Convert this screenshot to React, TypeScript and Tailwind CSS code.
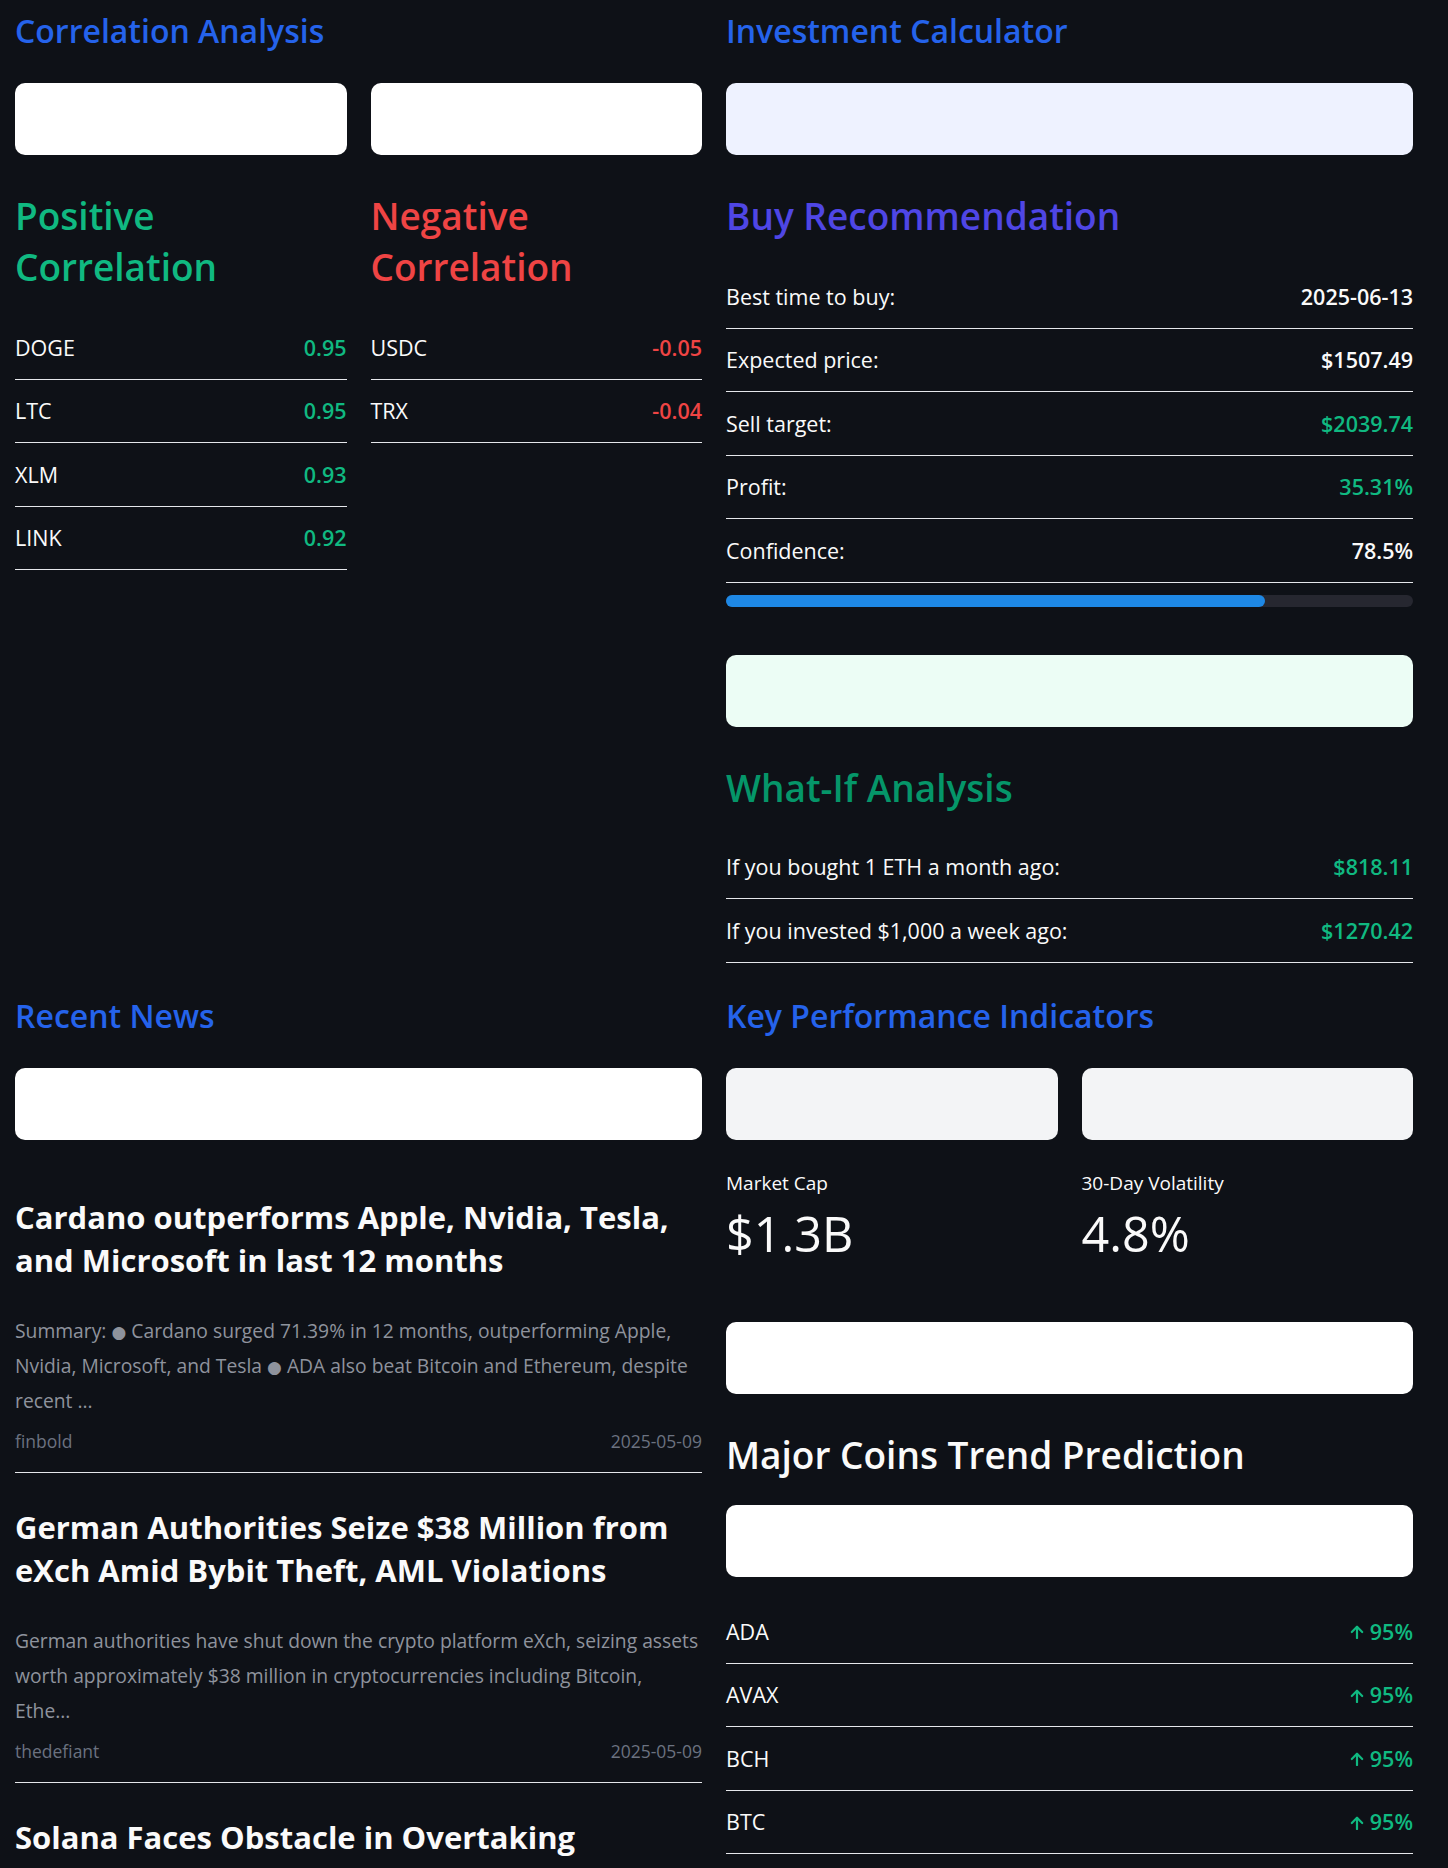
import React from "react";

interface IRowProps {
  label: string;
  value: React.ReactNode;
  valueClass: string;
}

const Row = (props: IRowProps) => (
  <div className="flex items-center justify-between border-b border-[#e5e7eb] py-[13.5px] text-[21.5px] leading-[35.5px]">
    <span>{props.label}</span>
    <span className={props.valueClass}>{props.value}</span>
  </div>
);

const ArrowUp = () => (
  <svg width="14" height="14" viewBox="0 0 14 14" fill="none" stroke="currentColor" strokeWidth="2.2" strokeLinecap="round" strokeLinejoin="round">
    <path d="M7 13V1.8" />
    <path d="M1.8 7 7 1.8 12.2 7" />
  </svg>
);

const Trend = ({ value }: { value: string }) => (
  <span className="flex items-center gap-[6px]">
    <span className="translate-y-[1px]">
      <ArrowUp />
    </span>
    {value}
  </span>
);

const Dot = () => <span className="font-['DejaVu_Sans'] text-[17px] leading-[1]">●</span>;

const positive = [
  { coin: "DOGE", value: "0.95" },
  { coin: "LTC", value: "0.95" },
  { coin: "XLM", value: "0.93" },
  { coin: "LINK", value: "0.92" },
];

const negative = [
  { coin: "USDC", value: "-0.05" },
  { coin: "TRX", value: "-0.04" },
];

const news = [
  {
    title: ["Cardano outperforms Apple, Nvidia, Tesla,", "and Microsoft in last 12 months"],
    summary: [
      <>
        Summary: <Dot /> Cardano surged 71.39% in 12 months, outperforming Apple,
      </>,
      <>
        Nvidia, Microsoft, and Tesla <Dot /> ADA also beat Bitcoin and Ethereum, despite
      </>,
      <>recent ...</>,
    ],
    source: "finbold",
    date: "2025-05-09",
  },
  {
    title: ["German Authorities Seize $38 Million from", "eXch Amid Bybit Theft, AML Violations"],
    summary: [
      <>German authorities have shut down the crypto platform eXch, seizing assets</>,
      <>worth approximately $38 million in cryptocurrencies including Bitcoin,</>,
      <>Ethe...</>,
    ],
    source: "thedefiant",
    date: "2025-05-09",
  },
];

const coins = ["ADA", "AVAX", "BCH", "BTC"];

const green = "font-semibold text-[#10b981]";
const red = "font-semibold text-[#ef4444]";
const white = "font-semibold";

export default function App() {
  return (
    <div className="h-[1868px] w-full overflow-hidden bg-[#0e1117] font-['Open_Sans',sans-serif] text-[#fafafa]">
      <div className="w-[1413px] pl-[15px] pt-[11px]">
        {/* top row */}
        <div className="grid grid-cols-[687px_687px] gap-x-[24px]">
          <section>
            <h2 className="text-[32px] leading-[40px] font-semibold text-[#2563eb]">Correlation Analysis</h2>
            <div className="mt-[32px] grid grid-cols-2 gap-[24px]">
              <div className="h-[72px] rounded-[10px] bg-white"></div>
              <div className="h-[72px] rounded-[10px] bg-white"></div>
            </div>
            <div className="mt-[35px] grid grid-cols-2 gap-[24px]">
              <div>
                <h3 className="text-[37px] leading-[51px] font-semibold text-[#10b981]">
                  Positive
                  <br />
                  Correlation
                </h3>
                <div className="mt-[24px]">
                  {positive.map((p) => (
                    <Row key={p.coin} label={p.coin} value={p.value} valueClass={green} />
                  ))}
                </div>
              </div>
              <div>
                <h3 className="text-[37px] leading-[51px] font-semibold text-[#ef4444]">
                  Negative
                  <br />
                  Correlation
                </h3>
                <div className="mt-[24px]">
                  {negative.map((p) => (
                    <Row key={p.coin} label={p.coin} value={p.value} valueClass={red} />
                  ))}
                </div>
              </div>
            </div>
          </section>

          <section>
            <h2 className="text-[32px] leading-[40px] font-semibold text-[#2563eb]">Investment Calculator</h2>
            <div className="mt-[32px] h-[72px] rounded-[10px] bg-[#eef2ff]"></div>
            <h3 className="mt-[35px] text-[37px] leading-[51px] font-semibold text-[#4f46e5]">Buy Recommendation</h3>
            <div className="mt-[24px]">
              <Row label="Best time to buy:" value="2025-06-13" valueClass={white} />
              <Row label="Expected price:" value="$1507.49" valueClass={white} />
              <Row label="Sell target:" value="$2039.74" valueClass={green} />
              <Row label="Profit:" value="35.31%" valueClass={green} />
              <Row label="Confidence:" value="78.5%" valueClass={white} />
            </div>
            <div className="mt-[12px] h-[12px] rounded-full bg-[#262730]">
              <div className="h-full w-[78.5%] rounded-full bg-[#1e88e5]"></div>
            </div>
            <div className="mt-[48px] h-[72px] rounded-[10px] bg-[#ecfdf5]"></div>
            <h3 className="mt-[35px] text-[37px] leading-[51px] font-semibold text-[#059669]">What-If Analysis</h3>
            <div className="mt-[23px]">
              <Row label="If you bought 1 ETH a month ago:" value="$818.11" valueClass={green} />
              <Row label="If you invested $1,000 a week ago:" value="$1270.42" valueClass={green} />
            </div>
          </section>
        </div>

        {/* bottom row */}
        <div className="mt-[33px] grid grid-cols-[687px_687px] gap-x-[24px]">
          <section>
            <h2 className="text-[32px] leading-[40px] font-semibold text-[#2563eb]">Recent News</h2>
            <div className="mt-[32px] h-[72px] rounded-[10px] bg-white"></div>
            <div className="mt-[23px]">
              {news.map((n, i) => (
                <div key={i} className="border-b border-[#e5e7eb] pt-[33.5px] pb-[18px]">
                  <h4 className="text-[31px] leading-[43px] font-bold">
                    {n.title[0]}
                    <br />
                    {n.title[1]}
                  </h4>
                  <p className="mt-[31px] text-[19.3px] leading-[35px] text-[#8e939d]">
                    {n.summary.map((s, j) => (
                      <React.Fragment key={j}>
                        {s}
                        {j < n.summary.length - 1 && <br />}
                      </React.Fragment>
                    ))}
                  </p>
                  <div className="mt-[9.5px] flex justify-between text-[17.5px] leading-[26px] text-[#6b7280]">
                    <span>{n.source}</span>
                    <span>{n.date}</span>
                  </div>
                </div>
              ))}
              <div className="pt-[33.5px]">
                <h4 className="text-[31px] leading-[43px] font-bold">
                  Solana Faces Obstacle in Overtaking
                  <br />
                  Ethereum as Developer Activity Slows
                </h4>
              </div>
            </div>
          </section>

          <section>
            <h2 className="text-[32px] leading-[40px] font-semibold text-[#2563eb]">Key Performance Indicators</h2>
            <div className="mt-[32px] grid grid-cols-2 gap-[24px]">
              <div className="h-[72px] rounded-[10px] bg-[#f3f4f6]"></div>
              <div className="h-[72px] rounded-[10px] bg-[#f3f4f6]"></div>
            </div>
            <div className="mt-[29px] grid grid-cols-2 gap-[24px]">
              <div>
                <div className="text-[19px] leading-[28px]">Market Cap</div>
                <div className="mt-[8px] text-[48.5px] leading-[56px]">$1.3B</div>
              </div>
              <div>
                <div className="text-[19px] leading-[28px]">30-Day Volatility</div>
                <div className="mt-[8px] text-[48.5px] leading-[56px]">4.8%</div>
              </div>
            </div>
            <div className="mt-[61px] h-[72px] rounded-[10px] bg-white"></div>
            <h3 className="mt-[35px] text-[37px] leading-[51px] font-semibold">Major Coins Trend Prediction</h3>
            <div className="mt-[25px] h-[72px] rounded-[10px] bg-white"></div>
            <div className="mt-[23.5px]">
              {coins.map((c) => (
                <Row key={c} label={c} value={<Trend value="95%" />} valueClass={green} />
              ))}
            </div>
          </section>
        </div>
      </div>
    </div>
  );
}
